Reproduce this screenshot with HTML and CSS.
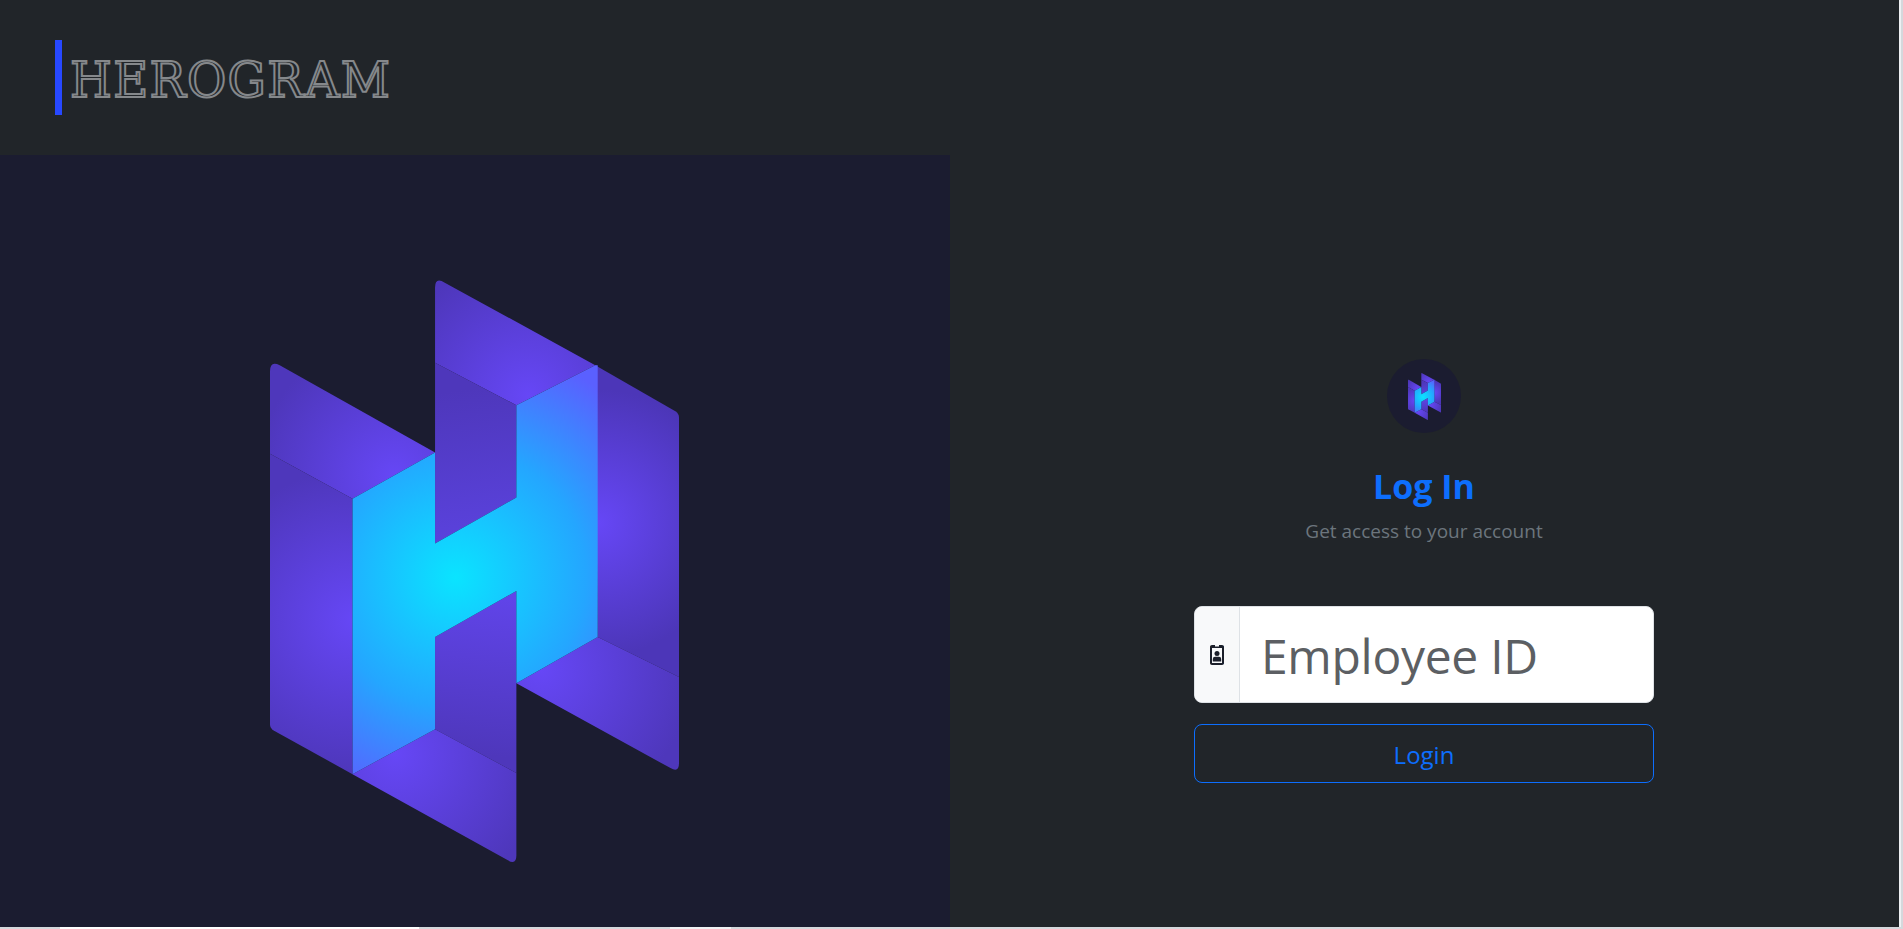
FILE: index.html
```html
<!DOCTYPE html>
<html lang="en">
<head>
    <meta charset="UTF-8">
    <meta name="viewport" content="width=device-width, initial-scale=1.0">
    <title>Herogram - Log In</title>
    <link rel="stylesheet" href="styles.css">
</head>
<body>
    <svg class="logo-defs" aria-hidden="true">
        <defs>
            <radialGradient id="glow" gradientUnits="userSpaceOnUse" cx="375" cy="475" r="195">
                <stop offset="0" stop-color="#0ae4ff"/>
                <stop offset="0.55" stop-color="#24a6ff"/>
                <stop offset="1" stop-color="#5a60ff"/>
            </radialGradient>
            <radialGradient id="face-left" gradientUnits="userSpaceOnUse" cx="292" cy="510" r="125">
                <stop offset="0" stop-color="#6647f6"/>
                <stop offset="1" stop-color="#4e37bb"/>
            </radialGradient>
            <radialGradient id="face-right" gradientUnits="userSpaceOnUse" cx="492" cy="430" r="110">
                <stop offset="0" stop-color="#6647f6"/>
                <stop offset="1" stop-color="#4c36b8"/>
            </radialGradient>
            <radialGradient id="face-top-left" gradientUnits="userSpaceOnUse" cx="325" cy="392" r="115">
                <stop offset="0" stop-color="#6647f6"/>
                <stop offset="1" stop-color="#4e37bb"/>
            </radialGradient>
            <radialGradient id="face-top" gradientUnits="userSpaceOnUse" cx="435" cy="325" r="115">
                <stop offset="0" stop-color="#6647f6"/>
                <stop offset="1" stop-color="#4e37bb"/>
            </radialGradient>
            <radialGradient id="face-foot-right" gradientUnits="userSpaceOnUse" cx="445" cy="550" r="125">
                <stop offset="0" stop-color="#6647f6"/>
                <stop offset="1" stop-color="#4e37bb"/>
            </radialGradient>
            <radialGradient id="face-foot" gradientUnits="userSpaceOnUse" cx="325" cy="620" r="125">
                <stop offset="0" stop-color="#6647f6"/>
                <stop offset="1" stop-color="#4e37bb"/>
            </radialGradient>
            <linearGradient id="wall-top" gradientUnits="userSpaceOnUse" x1="380" y1="320" x2="400" y2="440">
                <stop offset="0" stop-color="#4e37bb"/>
                <stop offset="1" stop-color="#5a42dc"/>
            </linearGradient>
            <linearGradient id="wall-foot" gradientUnits="userSpaceOnUse" x1="400" y1="490" x2="385" y2="620">
                <stop offset="0" stop-color="#6044e8"/>
                <stop offset="1" stop-color="#4e37bb"/>
            </linearGradient>
            <symbol id="hero-mark" viewBox="222 230 337 480">
                <path fill="url(#face-top-left)" d="M222 305Q222 296 230 300L358 372L290 410L222 373Z"/>
                <path fill="url(#face-left)" d="M222 373L290 410V637L225 601Q222 599 222 596Z"/>
                <path fill="url(#face-top)" d="M358 236Q358 227 366 232L490 300L425 333L358 298Z"/>
                <path fill="url(#wall-top)" d="M358 298L425 333V409L358 447Z"/>
                <path fill="url(#face-right)" d="M490 300L556 338Q559 340 559 343V557L492 524Z"/>
                <path fill="url(#face-foot-right)" d="M492 524L559 557V628Q559 636 552 632L425 562Z"/>
                <path fill="url(#wall-foot)" d="M358 524L425 486V636L358 600Z"/>
                <path fill="url(#face-foot)" d="M358 600L425 636V704Q425 712 418 708L290 637Z"/>
                <path fill="url(#glow)" d="M290 410L358 372V447L425 409V333L490 300L492 300V524L425 562V486L358 524V600L290 637Z"/>
            </symbol>
        </defs>
    </svg>

    <div class="page">
        <header class="site-header">
            <h1 class="brand">HEROGRAM</h1>
        </header>

        <main class="split">
            <section class="panel panel-art">
                <svg class="hero-logo" role="img" aria-label="Herogram logo"><use href="#hero-mark"/></svg>
            </section>

            <section class="panel panel-form">
                <div class="avatar">
                    <svg class="avatar-logo" aria-hidden="true"><use href="#hero-mark"/></svg>
                </div>
                <h2 class="form-title">Log In</h2>
                <p class="form-subtitle">Get access to your account</p>

                <form class="login-form">
                    <div class="input-group">
                        <span class="input-addon">
                            <svg class="badge-icon" viewBox="0 0 14 20" aria-hidden="true">
                                <rect x="0" y="1" width="1" height="18" fill="#d98a2b"/>
                                <rect x="13" y="1" width="1" height="18" fill="#2f78d8"/>
                                <path fill="#1b1f2a" fill-rule="evenodd" d="M2 0H5V1.500H9V0H12Q14 0 14 2V18Q14 20 12 20H2Q0 20 0 18V2Q0 0 2 0ZM2 3V18H12V3Z"/>
                                <circle cx="7" cy="8.500" r="2.500" fill="#1b1f2a"/>
                                <path fill="#1b1f2a" d="M2.800 16.500V14Q2.800 11.800 5 11.800H9Q11.200 11.800 11.200 14V16.500Z"/>
                            </svg>
                        </span>
                        <input class="input-field" type="text" placeholder="Employee ID" aria-label="Employee ID">
                    </div>
                    <button class="login-btn" type="button">Login</button>
                </form>
            </section>
        </main>
    </div>

    <div class="edge-strip">
        <span class="edge edge-a"></span>
        <span class="edge edge-b"></span>
        <span class="edge edge-c"></span>
        <span class="edge edge-d"></span>
    </div>
</body>
</html>
```

FILE: styles.css
```css
html, body {
    height: 100%;
}
body {
    margin: 0;
    overflow: hidden;
    background: #d5d8dc;
    font-family: "Open Sans", "Noto Sans", sans-serif;
}
.logo-defs {
    display: block;
    width: 0;
    height: 0;
}
.page {
    width: 1899px;
    height: 927px;
    display: flex;
    flex-direction: column;
    background: #212529;
    border-right: 2px solid #eef0f2;
}
.site-header {
    height: 155px;
    flex-shrink: 0;
    display: flex;
    align-items: center;
    padding-left: 55px;
}
.brand {
    height: 75px;
    margin: 0;
    padding-left: 8px;
    border-left: 7px solid #2748ff;
    font-family: "DejaVu Serif", serif;
    font-size: 48px;
    font-weight: 400;
    line-height: 81px;
    letter-spacing: 1.300px;
    color: transparent;
    -webkit-text-stroke: 2px #85888b;
}
.split {
    flex: 1;
    display: grid;
    grid-template-columns: 950px 1fr;
}
.panel {
    display: flex;
    flex-direction: column;
    align-items: center;
    justify-content: center;
    padding-top: 60px;
    box-sizing: border-box;
}
.panel-art {
    padding-right: 2px;
    background: #1b1c30;
}
.panel-form {
    padding-right: 1px;
}
.hero-logo {
    width: 409px;
    height: 583px;
}
.avatar {
    width: 74px;
    height: 74px;
    display: flex;
    align-items: center;
    justify-content: center;
    border-radius: 50%;
    background: #1b1c30;
}
.avatar-logo {
    width: 33px;
    height: 47px;
}
.form-title {
    margin: 29px 0 0;
    font-size: 34px;
    font-weight: 700;
    line-height: 48px;
    color: #0d6efd;
}
.form-subtitle {
    margin: 8px 0 0;
    font-size: 19px;
    line-height: 27px;
    color: #6c757d;
}
.login-form {
    width: 460px;
    margin-top: 61px;
}
.input-group {
    height: 97px;
    display: flex;
    box-sizing: border-box;
    border: 1px solid #dee2e6;
    border-radius: 8px;
    overflow: hidden;
    background: #fff;
}
.input-addon {
    width: 45px;
    flex-shrink: 0;
    display: flex;
    align-items: center;
    justify-content: center;
    box-sizing: border-box;
    border-right: 1px solid #dee2e6;
    background: #f8f9fa;
}
.badge-icon {
    width: 14px;
    height: 20px;
}
.input-field {
    flex: 1;
    min-width: 0;
    padding: 2px 21px 0;
    border: 0;
    outline: 0;
    background: transparent;
    font-family: inherit;
    font-size: 48px;
    font-weight: 400;
    letter-spacing: -0.3px;
    color: #212529;
}
.input-field::placeholder {
    color: #5c5f63;
    opacity: 1;
}
.login-btn {
    display: block;
    width: 100%;
    height: 59px;
    margin-top: 21px;
    padding-top: 2px;
    border: 1px solid #0d6efd;
    border-radius: 8px;
    background: transparent;
    font-family: inherit;
    font-size: 24px;
    color: #0d6efd;
}
.edge-strip {
    display: flex;
    height: 2px;
}
.edge {
    display: block;
}
.edge-a {
    width: 60px;
}
.edge-b {
    width: 359px;
    background: #fff;
}
.edge-c {
    width: 251px;
}
.edge-d {
    width: 61px;
    background: #f1f1f4;
}
```
